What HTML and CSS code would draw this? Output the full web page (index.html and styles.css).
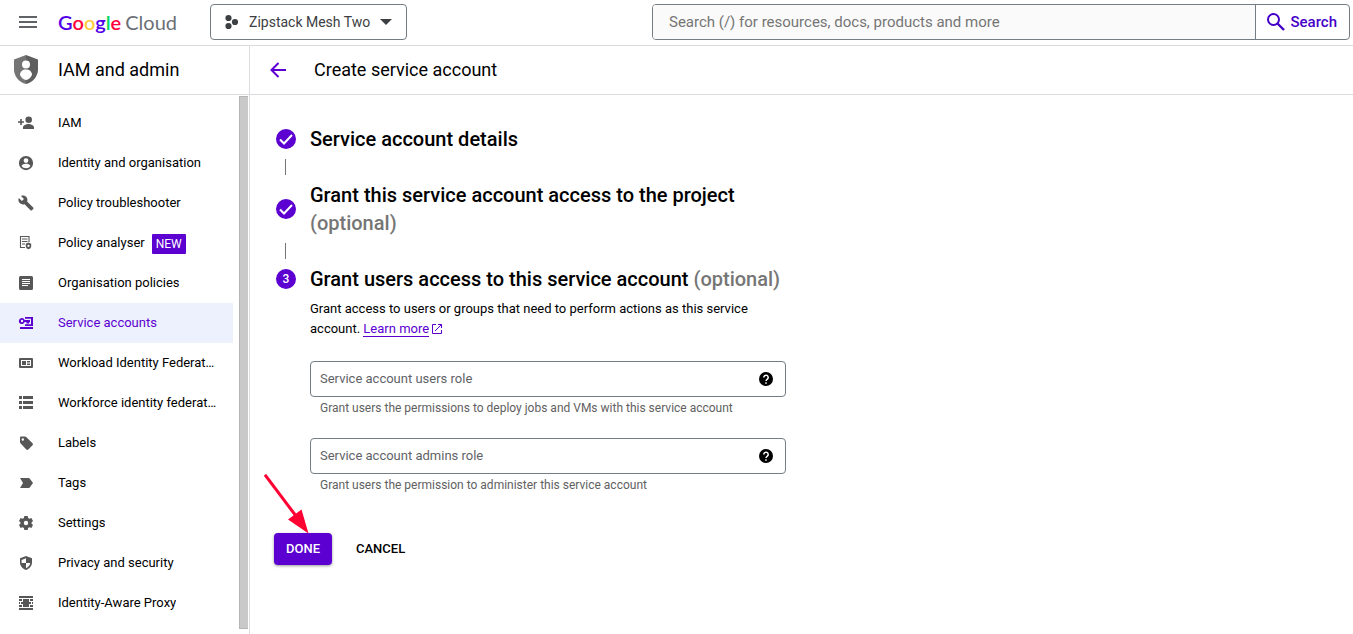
FILE: index.html
```
<!DOCTYPE html>
<html lang="en-GB">
<head>
<meta charset="utf-8">
<meta name="viewport" content="width=device-width, initial-scale=1">
<title>Create service account – IAM and admin</title>
<link rel="stylesheet" href="styles.css">
</head>
<body>
<header class="topbar">
  <button class="menu-button" type="button" aria-label="Main menu">
    <svg width="24" height="24" viewBox="0 0 24 24"><path d="M3 18h18v-2H3v2zm0-5h18v-2H3v2zm0-7v2h18V6H3z"/></svg>
  </button>
  <a class="logo" href="#"><span class="logo-google"><span class="c-blue">G</span><span class="c-red">o</span><span class="c-yellow">o</span><span class="c-blue">g</span><span class="c-green">l</span><span class="c-red">e</span></span><span class="logo-cloud">Cloud</span></a>
  <button class="project" type="button">
    <svg width="15" height="16" viewBox="0 0 15 16"><circle cx="4.500" cy="4" r="3.100"/><circle cx="4.500" cy="12" r="3.100"/><circle cx="11" cy="8" r="3.100"/></svg>
    <span>Zipstack Mesh Two</span>
    <svg width="12" height="6" viewBox="0 0 12 6"><path d="M0 0h12L6 6z"/></svg>
  </button>
  <form class="search">
    <input class="search-input" type="text" aria-label="Search" placeholder="Search (/) for resources, docs, products and more">
    <button class="search-button" type="button">
      <svg width="18" height="18" viewBox="0 0 18 18" fill="none" stroke="currentColor" stroke-width="2"><circle cx="6.500" cy="6.500" r="5.500"/><path d="M10.500 10.500L17 17" stroke-width="2.400"/></svg>
      <span>Search</span>
    </button>
  </form>
</header>
<div class="shell">
  <aside class="sidebar">
    <div class="product">
      <svg width="24" height="30" viewBox="0 0 24 30"><path fill="#757575" d="M12 0L0 4.500v10C0 21 5 27.500 12 29z"/><path fill="#5f5f5f" d="M12 0l12 4.500v10C24 21 19 27.500 12 29z"/><circle cx="12" cy="9.500" r="4" fill="#fff"/><path fill="#fff" d="M6 20c0-3.500 2.500-5.500 6-5.500s6 2 6 5.500C16.500 23 14.500 24.500 12 25 9.500 24.500 7.500 23 6 20z"/></svg>
      <span>IAM and admin</span>
    </div>
    <div class="nav-area">
      <nav class="nav" aria-label="IAM and admin">
        <a class="nav-item" href="#"><svg class="icon" viewBox="0 0 18 18"><path d="M11.700 9a3.300 3.300 0 1 0 0-6.600 3.300 3.300 0 0 0 0 6.600zM6 15v-1.700c0-2 3.600-3.300 5.500-3.300s5.500 1.300 5.500 3.300V15zM3.200 5h1.600v2.200H7v1.600H4.800V11H3.200V8.800H1V7.200h2.200z"/></svg><span class="nav-text">IAM</span></a>
        <a class="nav-item" href="#"><svg class="icon" viewBox="0 0 24 24"><path d="M12 2.500a9.500 9.500 0 1 0 0 19 9.500 9.500 0 0 0 0-19zm0 3a3.200 3.200 0 1 1 0 6.400 3.200 3.200 0 0 1 0-6.400zm0 13.500c-2.500 0-4.600-1.200-5.800-3 0-2 3.900-3 5.800-3s5.800 1 5.800 3c-1.200 1.800-3.300 3-5.800 3z"/></svg><span class="nav-text">Identity and organisation</span></a>
        <a class="nav-item" href="#"><svg class="icon" viewBox="0 0 24 24"><path d="M22.700 19l-9.100-9.100c.9-2.300.4-5-1.500-6.900-2-2-5-2.400-7.400-1.300L9 6 6 9 1.600 4.700C.4 7.100.9 10.100 2.900 12.100c1.900 1.900 4.600 2.400 6.900 1.500l9.100 9.100c.4.4 1 .4 1.400 0l2.300-2.300c.5-.4.500-1.100.1-1.400z" transform="translate(1 1) scale(.92)"/></svg><span class="nav-text">Policy troubleshooter</span></a>
        <a class="nav-item" href="#"><svg class="icon" viewBox="0 0 18 18"><path d="M8 13.500H3.500v-11h8.500V8M5 5h5.500M5 7.500h5.500M5 10h3" fill="none" stroke="currentColor" stroke-width="1.100"/><path fill-rule="evenodd" d="M11.500 8.500L14.200 9.700v2.600c0 1.500-1.200 2.500-2.700 3-1.500-.5-2.700-1.500-2.700-3V9.700zm0 2.300a1.100 1.100 0 1 0 0 2.200 1.100 1.100 0 0 0 0-2.200z"/></svg><span class="nav-text">Policy analyser</span><span class="tag">NEW</span></a>
        <a class="nav-item" href="#"><svg class="icon" viewBox="0 0 18 18"><path fill-rule="evenodd" d="M3.500 2h11A1.500 1.500 0 0 1 16 3.500v11a1.500 1.500 0 0 1-1.500 1.500h-11A1.500 1.500 0 0 1 2 14.500v-11A1.500 1.500 0 0 1 3.500 2zM5 5v1h8V5zm0 2v1h8V7zm0 2v1h8V9zm0 2v1h6v-1z"/></svg><span class="nav-text">Organisation policies</span></a>
        <a class="nav-item selected" href="#" aria-current="page"><svg class="icon" viewBox="0 0 18 18"><path fill-rule="evenodd" d="M8 3h8v9H8v-1.800h6V4.800H8zM5 4a3 3 0 0 1 2.700 2H13v2.200h-1v1.300H9.500V8H7.700A3 3 0 1 1 5 4zm0 1.800a1.200 1.200 0 1 0 0 2.400 1.200 1.200 0 0 0 0-2.400zM3 13h13v2H3z"/></svg><span class="nav-text">Service accounts</span></a>
        <a class="nav-item" href="#"><svg class="icon" viewBox="0 0 18 18"><path fill-rule="evenodd" d="M3 4h12a1 1 0 0 1 1 1v8a1 1 0 0 1-1 1H3a1 1 0 0 1-1-1V5a1 1 0 0 1 1-1zm1 2v6h10V6zm1 1h4v4H5zm5 0h3v1.500h-3zm0 2.500h3V11h-3z"/></svg><span class="nav-text">Workload Identity Federation</span></a>
        <a class="nav-item" href="#"><svg class="icon" viewBox="0 0 18 18"><path d="M2 2h3v3H2zm4 0h10v3H6zM2 7h3v3H2zm4 0h10v3H6zm-4 5h3v3H2zm4 0h10v3H6z"/></svg><span class="nav-text">Workforce identity federation</span></a>
        <a class="nav-item" href="#"><svg class="icon" viewBox="0 0 18 18"><path fill-rule="evenodd" d="M4.500 2.500H8c.5 0 .9.200 1.200.5l6.300 6.300c.6.600.6 1.400 0 2l-4.200 4.200c-.6.600-1.400.6-2 0L3.500 9.200c-.3-.3-.5-.7-.5-1.200V3.500c0-.6.400-1 1.500-1zM5.800 4.300a1.200 1.200 0 1 0 0 2.400 1.200 1.200 0 0 0 0-2.400z"/></svg><span class="nav-text">Labels</span></a>
        <a class="nav-item" href="#"><svg class="icon" viewBox="0 0 18 18"><path d="M3 4h8.500c.5 0 .9.200 1.200.6L16 9l-3.300 4.400c-.3.400-.7.600-1.200.6H3l3-5z"/></svg><span class="nav-text">Tags</span></a>
        <a class="nav-item" href="#"><svg class="icon" viewBox="0 0 18 18"><path fill-rule="evenodd" d="M7.300 2h3.400l.4 2 1.300.8 2-.7 1.600 2.900-1.500 1.400v1.200l1.500 1.400-1.600 2.900-2-.7-1.300.8-.4 2H7.300l-.4-2-1.300-.8-2 .7L2 11l1.500-1.400V8.400L2 7l1.600-2.900 2 .7L6.900 4zM9 6.800a2.200 2.200 0 1 0 0 4.400 2.200 2.200 0 0 0 0-4.400z"/></svg><span class="nav-text">Settings</span></a>
        <a class="nav-item" href="#"><svg class="icon" viewBox="0 0 18 18"><path fill-rule="evenodd" d="M9 2l6 2.300v4.200c0 3.500-2.500 6.300-6 7.500-3.500-1.200-6-4-6-7.500V4.300zm0 2.200V9H4.600V5.900zM9 9v5.200c2.300-1 3.900-2.900 4.200-5.200z"/></svg><span class="nav-text">Privacy and security</span></a>
        <a class="nav-item" href="#"><svg class="icon" viewBox="0 0 18 18"><path d="M2 2h14v2H2zm0 12h14v2H2zM6 5h6v8H6zM2 5h3v2H2zm11 0h3v2h-3zM4 8h10v2H4zM2 8h1v2H2zm13 0h1v2h-1zM2 11h3v2H2zm11 0h3v2h-3z"/></svg><span class="nav-text">Identity-Aware Proxy</span></a>
      </nav>
      <div class="scroll-thumb"></div>
    </div>
  </aside>
  <main class="main">
    <div class="page-header">
      <button class="back" type="button" aria-label="Back">
        <svg width="16" height="16" viewBox="0 0 16 16" fill="none" stroke="currentColor" stroke-width="2"><path d="M16 8H1.500M8.500 1L1.500 8l7 7"/></svg>
      </button>
      <h1 class="page-title">Create service account</h1>
    </div>
    <div class="content">
      <div class="step">
        <span class="step-badge"><svg width="20" height="20" viewBox="0 0 20 20"><path d="M4 10.500l4 4 8-8.500"/></svg></span>
        <h2 class="step-title">Service account details</h2>
      </div>
      <div class="connector"></div>
      <div class="step">
        <span class="step-badge"><svg width="20" height="20" viewBox="0 0 20 20"><path d="M4 10.500l4 4 8-8.500"/></svg></span>
        <h2 class="step-title">Grant this service account access to the project <span class="optional">(optional)</span></h2>
      </div>
      <div class="connector"></div>
      <div class="step">
        <span class="step-badge">3</span>
        <h2 class="step-title">Grant users access to this service account <span class="optional">(optional)</span></h2>
      </div>
      <div class="step-body">
        <p class="description">Grant access to users or groups that need to perform actions as this service account. <a class="learn" href="#">Learn more</a><svg class="external" width="10" height="10" viewBox="0 0 10 10"><path d="M4 .5H.5v9h9V6M6 .5h3.500V4M9.500.5L3 7"/></svg></p>
        <div class="field">
          <div class="field-box">
            <input class="field-input" id="users-role" type="text" aria-label="Service account users role" aria-describedby="users-hint" placeholder="Service account users role">
            <button class="help" type="button" aria-label="Help for users role"><svg width="14" height="14" viewBox="0 0 14 14"><circle cx="7" cy="7" r="7"/><path d="M4.800 5.500a2.200 2.200 0 1 1 3.500 1.700C7.500 7.800 7 8.100 7 9.100M7 10.200v1.600" fill="none" stroke="#fff" stroke-width="1.500"/></svg></button>
          </div>
          <div class="hint" id="users-hint">Grant users the permissions to deploy jobs and VMs with this service account</div>
        </div>
        <div class="field">
          <div class="field-box">
            <input class="field-input" id="admins-role" type="text" aria-label="Service account admins role" aria-describedby="admins-hint" placeholder="Service account admins role">
            <button class="help" type="button" aria-label="Help for admins role"><svg width="14" height="14" viewBox="0 0 14 14"><circle cx="7" cy="7" r="7"/><path d="M4.800 5.500a2.200 2.200 0 1 1 3.500 1.700C7.500 7.800 7 8.100 7 9.100M7 10.200v1.600" fill="none" stroke="#fff" stroke-width="1.500"/></svg></button>
          </div>
          <div class="hint" id="admins-hint">Grant users the permission to administer this service account</div>
        </div>
      </div>
      <div class="actions">
        <button class="done" type="button">DONE</button>
        <button class="cancel" type="button">CANCEL</button>
        <svg class="pointer" width="46" height="60" viewBox="0 0 46 60"><path d="M1 .8L32 42" stroke="#ff0033" stroke-width="3"/><path d="M44.500 59.500L24 45.500 37.500 35.500z" fill="#ff0033"/></svg>
      </div>
    </div>
  </main>
</div>
</body>
</html>
```
FILE: styles.css
```
* {
  box-sizing: border-box;
}

body {
  margin: 0;
  min-height: 100vh;
  display: flex;
  flex-direction: column;
  font-family: Roboto, "Liberation Sans", sans-serif;
  font-size: 13px;
  line-height: 20px;
  color: #000;
  background: #fff;
}

button,
input {
  font: inherit;
  color: inherit;
  margin: 0;
  padding: 0;
  border: 0;
  background: none;
}

svg {
  display: block;
  flex: none;
}

a {
  color: inherit;
  text-decoration: none;
}

/* Top bar */
.topbar {
  display: flex;
  align-items: center;
  height: 46px;
  padding: 0 3px 2px 16px;
  border-bottom: 1px solid #dadce0;
}

.menu-button {
  margin-right: 18px;
  fill: #5f6368;
}

.logo {
  display: flex;
  gap: 4px;
  width: 152px;
  font-family: Lato, sans-serif;
  font-size: 20px;
  line-height: 24px;
}

.logo-google {
  font-weight: 600;
}

.logo-cloud {
  color: #6b6f75;
}

.c-blue {
  color: #5200e8;
}

.c-red {
  color: #ff0038;
}

.c-yellow {
  color: #ffcc40;
}

.c-green {
  color: #00d860;
}

.project {
  display: flex;
  align-items: center;
  height: 36px;
  padding: 0 14px 0 13px;
  gap: 10px;
  border: 1px solid #747d83;
  border-radius: 4px;
  font-size: 14px;
  color: #3c4043;
  fill: currentColor;
  white-space: nowrap;
}

.search {
  display: flex;
  flex: 1;
  max-width: 698px;
  height: 36px;
  margin-left: auto;
  border: 1px solid #747d83;
  border-radius: 4px;
  overflow: hidden;
}

.search-input {
  flex: 1;
  min-width: 0;
  padding: 0 16px;
  font-size: 15px;
  background: #fafafa;
  border-right: 1px solid #747d83;
}

.search-input::placeholder {
  color: #757575;
  opacity: 1;
}

.search-button {
  display: flex;
  align-items: center;
  gap: 5px;
  padding: 0 12px 0 11px;
  font-size: 15px;
  font-weight: 500;
  color: #4500c8;
}

/* Sidebar */
.shell {
  display: flex;
  flex: 1;
}

.sidebar {
  display: flex;
  flex-direction: column;
  flex: none;
  width: 250px;
  border-right: 1px solid #dadce0;
}

.product {
  display: flex;
  align-items: center;
  gap: 20px;
  height: 49px;
  padding-left: 14px;
  border-bottom: 1px solid #dadce0;
  font-size: 18px;
}

.nav-area {
  display: flex;
  flex: 1;
  gap: 6px;
}

.nav {
  width: 233px;
  padding-top: 8px;
}

.nav-item {
  display: flex;
  align-items: center;
  height: 40px;
  padding: 0 16px 0 17px;
}

.icon {
  width: 18px;
  height: 18px;
  margin-right: 23px;
  fill: currentColor;
  color: #575757;
}

.nav-text {
  overflow: hidden;
  text-overflow: ellipsis;
  white-space: nowrap;
}

.selected {
  background: #edf1fe;
  color: #5b00d0;
}

.selected .icon {
  color: #5b00d0;
}

.tag {
  margin: 2px 0 0 7px;
  padding: 0 4px;
  border-radius: 1px;
  font-size: 12px;
  color: #fff;
  background: #5b00d0;
}

.scroll-thumb {
  width: 9px;
  margin: 1px 0 5px;
  background: #c9c9c9;
  border: 1px solid #b5b5b5;
  border-right: 0;
}

/* Main panel */
.main {
  flex: 1;
  min-width: 0;
}

.page-header {
  display: flex;
  align-items: center;
  gap: 28px;
  height: 49px;
  padding-left: 20px;
  border-bottom: 1px solid #dadce0;
}

.back {
  color: #5b00d0;
}

.page-title {
  margin: 0;
  font-size: 18px;
  font-weight: 400;
}

.content {
  max-width: 560px;
  padding: 30px 24px 16px;
}

.step {
  display: flex;
  align-items: center;
  gap: 14px;
  padding-left: 2px;
}

.step-badge {
  flex: none;
  width: 20px;
  height: 20px;
  border-radius: 50%;
  font-size: 12px;
  font-weight: 500;
  text-align: center;
  color: #fff;
  background: #5b00d0;
}

.step-badge path {
  fill: none;
  stroke: #fff;
  stroke-width: 2;
}

.step-title {
  margin: 0;
  font-size: 20px;
  line-height: 28px;
  font-weight: 500;
}

.optional {
  color: #757575;
}

.connector {
  width: 1px;
  height: 16px;
  margin: 6px 11px;
  background: #757575;
}

.step-body {
  padding-left: 36px;
}

.description {
  margin: 6px 0 22px;
}

.learn {
  color: #5b00d0;
  border-bottom: 1px solid #5b00d0;
}

.external {
  display: inline-block;
  margin-left: 3px;
  vertical-align: -1px;
  fill: none;
  stroke: #5b00d0;
}

.field {
  margin-bottom: 22px;
}

.field-box {
  display: flex;
  align-items: center;
  height: 36px;
  padding: 0 12px 0 9px;
  border: 1px solid #747d83;
  border-radius: 4px;
}

.field-input {
  flex: 1;
  min-width: 0;
  outline: none;
}

.field-input::placeholder {
  color: #5f6368;
  opacity: 1;
}

.hint {
  padding: 3px 10px 0;
  font-size: 12px;
  line-height: 16px;
  color: #616161;
}

.actions {
  position: relative;
  display: flex;
  gap: 12px;
  padding-top: 18px;
}

.done,
.cancel {
  height: 32px;
  padding: 0 12px;
  border-radius: 4px;
  font-weight: 500;
}

.done {
  color: #fff;
  background: #5b00d0;
  box-shadow: 0 1px 3px rgba(0, 0, 0, 0.4);
}

.pointer {
  position: absolute;
  left: -10px;
  top: -41px;
}
```
